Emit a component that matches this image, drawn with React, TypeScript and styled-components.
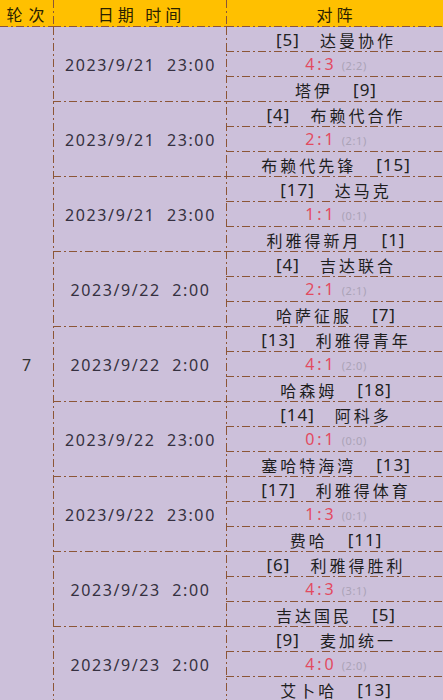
import React from 'react';
import styled, { createGlobalStyle } from 'styled-components';

const LINE = '#8c5636';
const BG = '#ccc0da';
const GOLD = '#ffc000';

const hLine = `repeating-linear-gradient(to right, ${LINE} 0 8px, transparent 8px 11px, ${LINE} 11px 13px, transparent 13px 16px)`;
const vLine = `repeating-linear-gradient(to bottom, ${LINE} 0 8px, transparent 8px 11px, ${LINE} 11px 13px, transparent 13px 16px)`;

const Global = createGlobalStyle`
  *, *::before, *::after { box-sizing: border-box; }
  html, body { margin: 0; padding: 0; background: ${BG}; }
  body { font-family: "Noto Sans CJK SC", "Noto Sans", sans-serif; }
`;

const Sheet = styled.div`
  width: 443px;
  height: 700px;
  overflow: hidden;
  background: ${BG};
`;

const HeaderRow = styled.div`
  display: grid;
  grid-template-columns: 53px 173px 1fr;
  height: 27px;
  background: ${GOLD};
`;

const HeaderCell = styled.div<{ $first?: boolean }>`
  display: flex;
  align-items: center;
  justify-content: center;
  font-size: 16px;
  line-height: 1;
  letter-spacing: ${(p) => (p.$first ? '6px' : '4px')};
  white-space: pre;
  color: #2a2200;
  background-image: ${hLine}${(p) => (p.$first ? '' : `, ${vLine}`)};
  background-size: 100% 1px${(p) => (p.$first ? '' : ', 1px 100%')};
  background-position: left bottom${(p) => (p.$first ? '' : ', left top')};
  background-repeat: no-repeat;
  padding-left: 4px;
`;

const Body = styled.div`
  display: grid;
  grid-template-columns: 53px 173px 1fr;
`;

const RoundCell = styled.div`
  display: flex;
  align-items: center;
  justify-content: center;
  font-family: "Noto Sans", sans-serif;
  font-size: 16px;
  color: #333;
`;

const Column = styled.div`
  display: flex;
  flex-direction: column;
  background-image: ${vLine};
  background-size: 1px 100%;
  background-position: left top;
  background-repeat: no-repeat;
`;

const DateCell = styled.div`
  height: 75px;
  flex: none;
  display: flex;
  align-items: center;
  justify-content: center;
  font-family: "Noto Sans", sans-serif;
  font-size: 16px;
  letter-spacing: 1.6px;
  color: #353040;
  white-space: pre;
  background-image: ${hLine};
  background-size: 100% 1px;
  background-position: left bottom;
  background-repeat: no-repeat;
  padding-left: 2px;
`;

const Line = styled.div`
  height: 25px;
  flex: none;
  display: flex;
  align-items: center;
  justify-content: center;
  gap: 20px;
  line-height: 1;
  color: #1e1e1e;
  background-image: ${hLine};
  background-size: 100% 1px;
  background-position: left bottom;
  background-repeat: no-repeat;
  padding-left: 3px;
`;

const Seed = styled.span`
  font-family: "Noto Sans", sans-serif;
  font-size: 17px;
  letter-spacing: 1px;
  color: #222;
`;

const TeamName = styled.span`
  font-size: 16px;
  letter-spacing: 3px;
  color: #1e1e1e;
`;

const ScoreLine = styled(Line)`
  gap: 5px;
  align-items: baseline;
  padding-top: 4px;
`;

const Score = styled.span`
  font-family: "Noto Sans", sans-serif;
  font-size: 16px;
  letter-spacing: 3px;
  color: #e24a60;
`;

const Half = styled.span`
  font-family: "Noto Sans", sans-serif;
  font-size: 11px;
  letter-spacing: 0.6px;
  color: #aaa2b6;
`;

type Match = {
  date: string;
  home: [string, string];
  away: [string, string];
  score: string;
  half: string;
};

const matches: Match[] = [
  { date: '2023/9/21 23:00', home: ['[5]', '达曼协作'], score: '4:3', half: '(2:2)', away: ['塔伊', '[9]'] },
  { date: '2023/9/21 23:00', home: ['[4]', '布赖代合作'], score: '2:1', half: '(2:1)', away: ['布赖代先锋', '[15]'] },
  { date: '2023/9/21 23:00', home: ['[17]', '达马克'], score: '1:1', half: '(0:1)', away: ['利雅得新月', '[1]'] },
  { date: '2023/9/22 2:00', home: ['[4]', '吉达联合'], score: '2:1', half: '(2:1)', away: ['哈萨征服', '[7]'] },
  { date: '2023/9/22 2:00', home: ['[13]', '利雅得青年'], score: '4:1', half: '(2:0)', away: ['哈森姆', '[18]'] },
  { date: '2023/9/22 23:00', home: ['[14]', '阿科多'], score: '0:1', half: '(0:0)', away: ['塞哈特海湾', '[13]'] },
  { date: '2023/9/22 23:00', home: ['[17]', '利雅得体育'], score: '1:3', half: '(0:1)', away: ['费哈', '[11]'] },
  { date: '2023/9/23 2:00', home: ['[6]', '利雅得胜利'], score: '4:3', half: '(3:1)', away: ['吉达国民', '[5]'] },
  { date: '2023/9/23 2:00', home: ['[9]', '麦加统一'], score: '4:0', half: '(2:0)', away: ['艾卜哈', '[13]'] },
];

export default function App() {
  return (
    <Sheet>
      <Global />
      <HeaderRow>
        <HeaderCell $first>轮次</HeaderCell>
        <HeaderCell>日期 时间</HeaderCell>
        <HeaderCell>对阵</HeaderCell>
      </HeaderRow>
      <Body>
        <RoundCell>7</RoundCell>
        <Column>
          {matches.map((m, i) => (
            <DateCell key={i}>{m.date.replace(' ', '  ')}</DateCell>
          ))}
        </Column>
        <Column>
          {matches.map((m, i) => (
            <React.Fragment key={i}>
              <Line>
                <Seed>{m.home[0]}</Seed>
                <TeamName>{m.home[1]}</TeamName>
              </Line>
              <ScoreLine>
                <Score>{m.score}</Score>
                <Half>{m.half}</Half>
              </ScoreLine>
              <Line>
                <TeamName>{m.away[0]}</TeamName>
                <Seed>{m.away[1]}</Seed>
              </Line>
            </React.Fragment>
          ))}
        </Column>
      </Body>
    </Sheet>
  );
}
